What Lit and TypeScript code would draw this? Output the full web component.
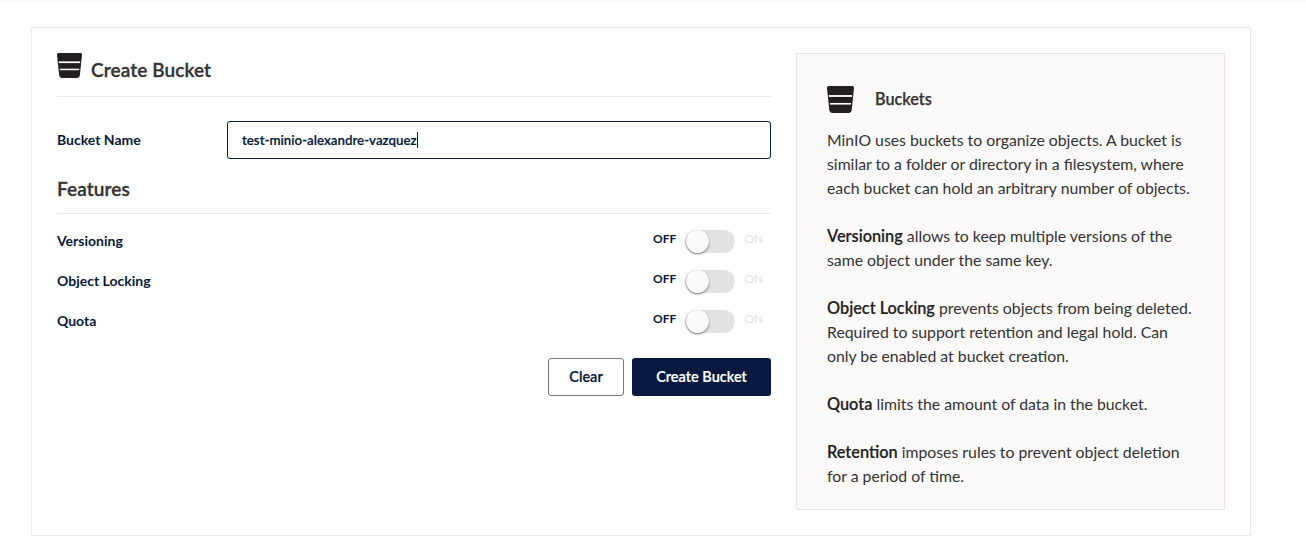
import { LitElement, html, css, svg } from "lit";
import { customElement } from "lit/decorators.js";

const bucket = (w: number, h: number, cls: string) => html`<svg class=${cls} width=${w} height=${h} viewBox="0 0 25 25" aria-hidden="true">
  ${svg`<path fill="#231f20" d="M2 0H23C24.4 0 25.1.7 25 2L22.9 22C22.7 24 21.6 25 19.8 25H5.2C3.4 25 2.3 24 2.1 22L0 2C-.1.7.6 0 2 0Z"/>
  <rect x="1.8" y="8.4" width="21.4" height="1.7" fill="#fff"/>
  <rect x="2.8" y="15.7" width="19.4" height="1.5" fill="#fff"/>`}
</svg>`;

@customElement("app-root")
export class AppRoot extends LitElement {
  static styles = css`
    :host { display: block; height: 560px; box-sizing: border-box; padding: 27px 55px 0 31px; font-family: Lato, "Liberation Sans", sans-serif; color: #07193e; background: #fff; overflow: hidden; position: relative; }
    .topshade { position: absolute; left: 0; right: 0; top: 0; height: 4px; background: linear-gradient(#f8f8f8, #fff); }
    .card { box-sizing: border-box; height: 509px; border: 1px solid #eaeaea; padding: 25px; display: flex; gap: 25px; }
    .form { width: 714px; flex: none; display: flex; flex-direction: column; }
    .title { display: flex; align-items: flex-end; height: 43px; border-bottom: 1px solid #eaeaea; color: #333; font-size: 19px; font-weight: 600; letter-spacing: .1px; -webkit-text-stroke: .3px #333; }
    .title .ico { margin-bottom: 18px; }
    .title span { margin-left: 9px; line-height: 22px; margin-bottom: 15px; }
    .name-row { display: flex; align-items: center; margin-top: 24px; height: 38px; }
    .lbl { font-size: 14px; font-weight: 700; line-height: 18px; }
    .name-row .lbl { width: 170px; margin-top: -1px; }
    .input { flex: 1; box-sizing: border-box; height: 38px; border: 1px solid #07193e; border-radius: 3px; padding: 0 14px; display: flex; align-items: center; font-size: 13.3px; font-weight: 600; -webkit-text-stroke: .2px #07193e; }
    .caret { width: 1px; height: 16px; background: #07193e; }
    h3 { margin: 19px 0 0; font-size: 19px; font-weight: 600; letter-spacing: .1px; line-height: 22px; color: #333; padding-bottom: 13px; border-bottom: 1px solid #eaeaea; -webkit-text-stroke: .3px #333; }
    .rows { display: flex; flex-direction: column; gap: 10px; margin-top: 12px; }
    .row { height: 30px; display: flex; align-items: center; justify-content: space-between; padding-right: 8px; }
    .sw { display: flex; align-items: center; font-size: 12px; font-weight: 700; }
    .off { width: 32px; text-align: left; margin-top: -6px; }
    .on { width: 28px; text-align: right; color: #e2e2e2; font-weight: 400; margin-top: -6px; }
    .track { width: 50px; height: 23px; border-radius: 12px; background: #e2e2e2; position: relative; }
    .knob { position: absolute; left: 1px; top: 0; width: 23px; height: 23px; border-radius: 50%; background: #fafafa; box-shadow: 0 1px 2px rgba(0,0,0,.55); }
    .actions { display: flex; justify-content: flex-end; gap: 8px; margin-top: 22px; }
    button { font: inherit; font-size: 14.5px; font-weight: 600; height: 38px; border-radius: 3px; padding: 0 0 2px; }
    .clear { width: 76px; background: #fff; color: #07193e; border: 1px solid #6f7789; -webkit-text-stroke: .2px #07193e; }
    .create { width: 139px; background: #07193e; color: #fff; border: 0; -webkit-text-stroke: .2px #fff; }
    .help { width: 429px; box-sizing: border-box; height: 457px; flex: none; background: #fbf9fa; border: 1px solid #e5e5e5; padding: 31px 30px 0; color: #333; font-size: 15.8px; line-height: 24px; }
    .help-head { display: flex; align-items: center; height: 28px; font-weight: 600; font-size: 16.2px; margin-bottom: 15px; -webkit-text-stroke: .25px #333; }
    .help-head span { margin-left: 21px; }
    .help-head svg { flex: none; }
    p { margin: 0 0 24px; white-space: nowrap; }
    b { font-weight: 600; font-size: 16.3px; color: #222; -webkit-text-stroke: .15px #222; }
  `;

  private renderRow(label: string) {
    return html`<div class="row"><span class="lbl">${label}</span>
      <div class="sw"><span class="off">OFF</span><div class="track"><div class="knob"></div></div><span class="on">ON</span></div></div>`;
  }

  render() {
    return html`<div class="topshade"></div>
    <div class="card">
      <div class="form">
        <div class="title">${bucket(25, 25, "ico")}<span>Create Bucket</span></div>
        <div class="name-row"><span class="lbl">Bucket Name</span><div class="input">test-minio-alexandre-vazquez<i class="caret"></i></div></div>
        <h3>Features</h3>
        <div class="rows">${["Versioning", "Object Locking", "Quota"].map((l) => this.renderRow(l))}</div>
        <div class="actions"><button class="clear">Clear</button><button class="create">Create Bucket</button></div>
      </div>
      <div class="help">
        <div class="help-head">${bucket(27, 27, "")}<span>Buckets</span></div>
        <p>MinIO uses buckets to organize objects. A bucket is<br>similar to a folder or directory in a filesystem, where<br>each bucket can hold an arbitrary number of objects.</p>
        <p><b>Versioning</b> allows to keep multiple versions of the<br>same object under the same key.</p>
        <p><b>Object Locking</b> prevents objects from being deleted.<br>Required to support retention and legal hold. Can<br>only be enabled at bucket creation.</p>
        <p><b>Quota</b> limits the amount of data in the bucket.</p>
        <p><b>Retention</b> imposes rules to prevent object deletion<br>for a period of time.</p>
      </div>
    </div>`;
  }
}
